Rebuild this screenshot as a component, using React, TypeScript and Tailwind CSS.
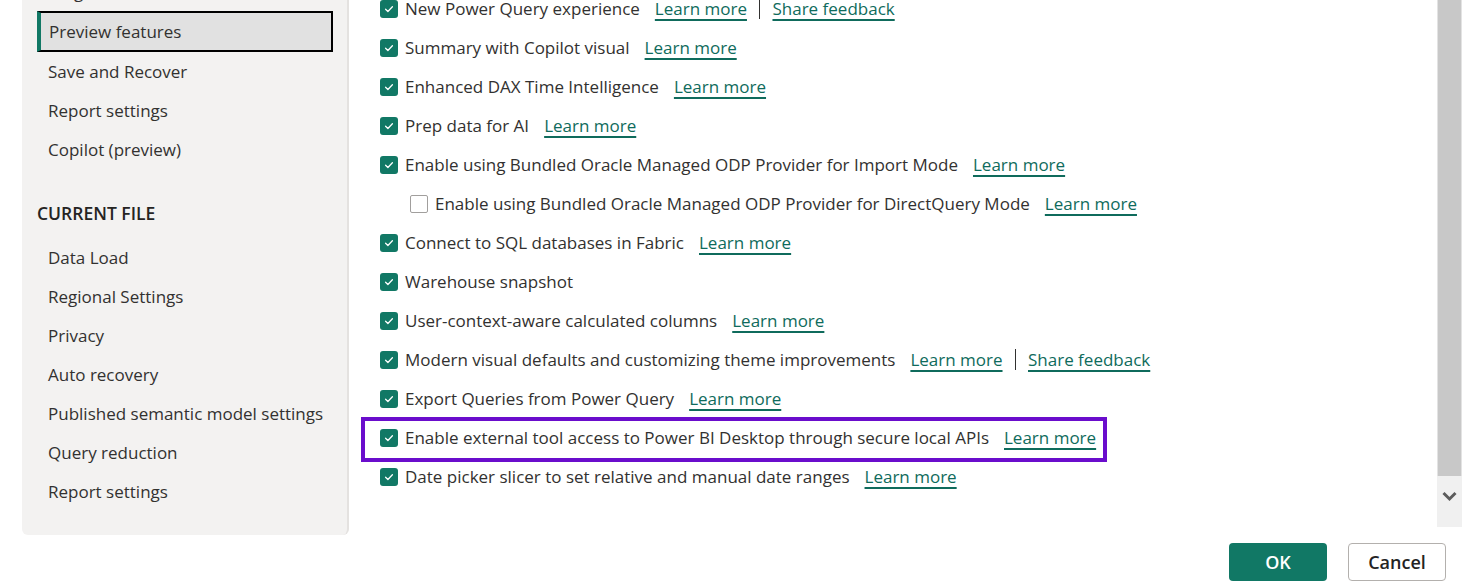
import React from "react";

type Row = {
  label: string;
  checked?: boolean;
  indent?: boolean;
  learn?: boolean;
  feedback?: boolean;
  highlight?: boolean;
};

const rows: Row[] = [
  { label: "New Power Query experience", checked: true, learn: true, feedback: true },
  { label: "Summary with Copilot visual", checked: true, learn: true },
  { label: "Enhanced DAX Time Intelligence", checked: true, learn: true },
  { label: "Prep data for AI", checked: true, learn: true },
  { label: "Enable using Bundled Oracle Managed ODP Provider for Import Mode", checked: true, learn: true },
  { label: "Enable using Bundled Oracle Managed ODP Provider for DirectQuery Mode", checked: false, indent: true, learn: true },
  { label: "Connect to SQL databases in Fabric", checked: true, learn: true },
  { label: "Warehouse snapshot", checked: true },
  { label: "User-context-aware calculated columns", checked: true, learn: true },
  { label: "Modern visual defaults and customizing theme improvements", checked: true, learn: true, feedback: true },
  { label: "Export Queries from Power Query", checked: true, learn: true },
  { label: "Enable external tool access to Power BI Desktop through secure local APIs", checked: true, learn: true, highlight: true },
  { label: "Date picker slicer to set relative and manual date ranges", checked: true, learn: true },
];

function Checkbox({ checked }: { checked?: boolean }) {
  if (checked) {
    return (
      <span className="w-[18px] h-[18px] rounded-[3px] bg-[#117865] flex items-center justify-center shrink-0">
        <svg width="12" height="12" viewBox="0 0 12 12" fill="none">
          <path d="M2.6 6.3 L4.9 8.5 L9.4 3.8" stroke="white" strokeWidth="1.3" strokeLinecap="round" strokeLinejoin="round" />
        </svg>
      </span>
    );
  }
  return <span className="w-[18px] h-[18px] rounded-[2px] border border-[#a19f9d] bg-white shrink-0" />;
}

function Link({ children }: { children: React.ReactNode }) {
  return (
    <span className="text-[#0f6b5c] underline decoration-[#0f6b5c] decoration-[1.5px] underline-offset-[4px] cursor-pointer">
      {children}
    </span>
  );
}

function SideItem({ label }: { label: string }) {
  return <div className="h-[39px] flex items-center pl-[11px] text-[#323130]">{label}</div>;
}

export default function App() {
  return (
    <div className="w-[1479px] h-[588px] bg-white overflow-hidden font-['Segoe_UI','Open_Sans',sans-serif] text-[17px] text-[#323130]">
      <div className="flex h-[535px]">
        {/* Sidebar */}
        <div className="ml-[22px] w-[327px] h-[535px] bg-[#f3f2f1] rounded-b-[6px] border-r-2 border-[#e4e2e0] pl-[15px] pr-[14px] flex flex-col overflow-hidden">
          <div className="mt-[-28px]">
            <SideItem label="Diagnostics" />
          </div>
          <div className="h-[41px] flex items-center border-2 border-black border-l-4 border-l-[#117865] bg-[#e1e1e1] pl-[8px] text-[#323130]">
            Preview features
          </div>
          <SideItem label="Save and Recover" />
          <SideItem label="Report settings" />
          <SideItem label="Copilot (preview)" />
          <div className="mt-[29px] mb-[10px] h-[30px] flex items-center font-semibold text-[#252423] text-[17.5px]">
            CURRENT FILE
          </div>
          <SideItem label="Data Load" />
          <SideItem label="Regional Settings" />
          <SideItem label="Privacy" />
          <SideItem label="Auto recovery" />
          <SideItem label="Published semantic model settings" />
          <SideItem label="Query reduction" />
          <SideItem label="Report settings" />
        </div>

        {/* Content */}
        <div className="flex-1 pl-[31px] mt-[-11px] flex flex-col">
          {rows.map((r, i) => (
            <div key={i} className={`relative h-[39px] flex items-center shrink-0 ${r.indent ? "pl-[30px]" : ""}`}>
              {r.highlight && (
                <div className="absolute left-[-19px] top-[-1px] w-[746px] h-[45px] border-4 border-[#6a0dcc] pointer-events-none" />
              )}
              <Checkbox checked={r.checked} />
              <span className="ml-[7px] whitespace-nowrap">{r.label}</span>
              {r.learn && (
                <span className="ml-[15px] whitespace-nowrap">
                  <Link>Learn more</Link>
                </span>
              )}
              {r.feedback && (
                <>
                  <span className="mx-[12px] w-[1.5px] h-[21px] bg-[#323130]" />
                  <span className="whitespace-nowrap">
                    <Link>Share feedback</Link>
                  </span>
                </>
              )}
            </div>
          ))}
        </div>

        {/* Scrollbar */}
        <div className="w-[25px] h-[527px] mr-[17px] flex flex-col shrink-0">
          <div className="h-[476px] bg-[#c8c8c8] border-x border-[#e3e3e3]" />
          <div className="flex-1 bg-[#f0f0f0] flex justify-center pt-[15px]">
            <svg width="15" height="11" viewBox="0 0 15 11" fill="none">
              <path d="M1.5 2 L7.5 8 L13.5 2" stroke="#5c5c5c" strokeWidth="3" />
            </svg>
          </div>
        </div>
      </div>

      {/* Buttons */}
      <div className="flex justify-end gap-[21px] pr-[33px] mt-[8px]">
        <button className="w-[98px] h-[38px] rounded-[4px] bg-[#117865] text-white text-[18px] font-semibold">OK</button>
        <button className="w-[98px] h-[38px] rounded-[4px] bg-white border-[1.5px] border-[#b3b0ad] text-[#242424] text-[18px] font-semibold">
          Cancel
        </button>
      </div>
    </div>
  );
}
